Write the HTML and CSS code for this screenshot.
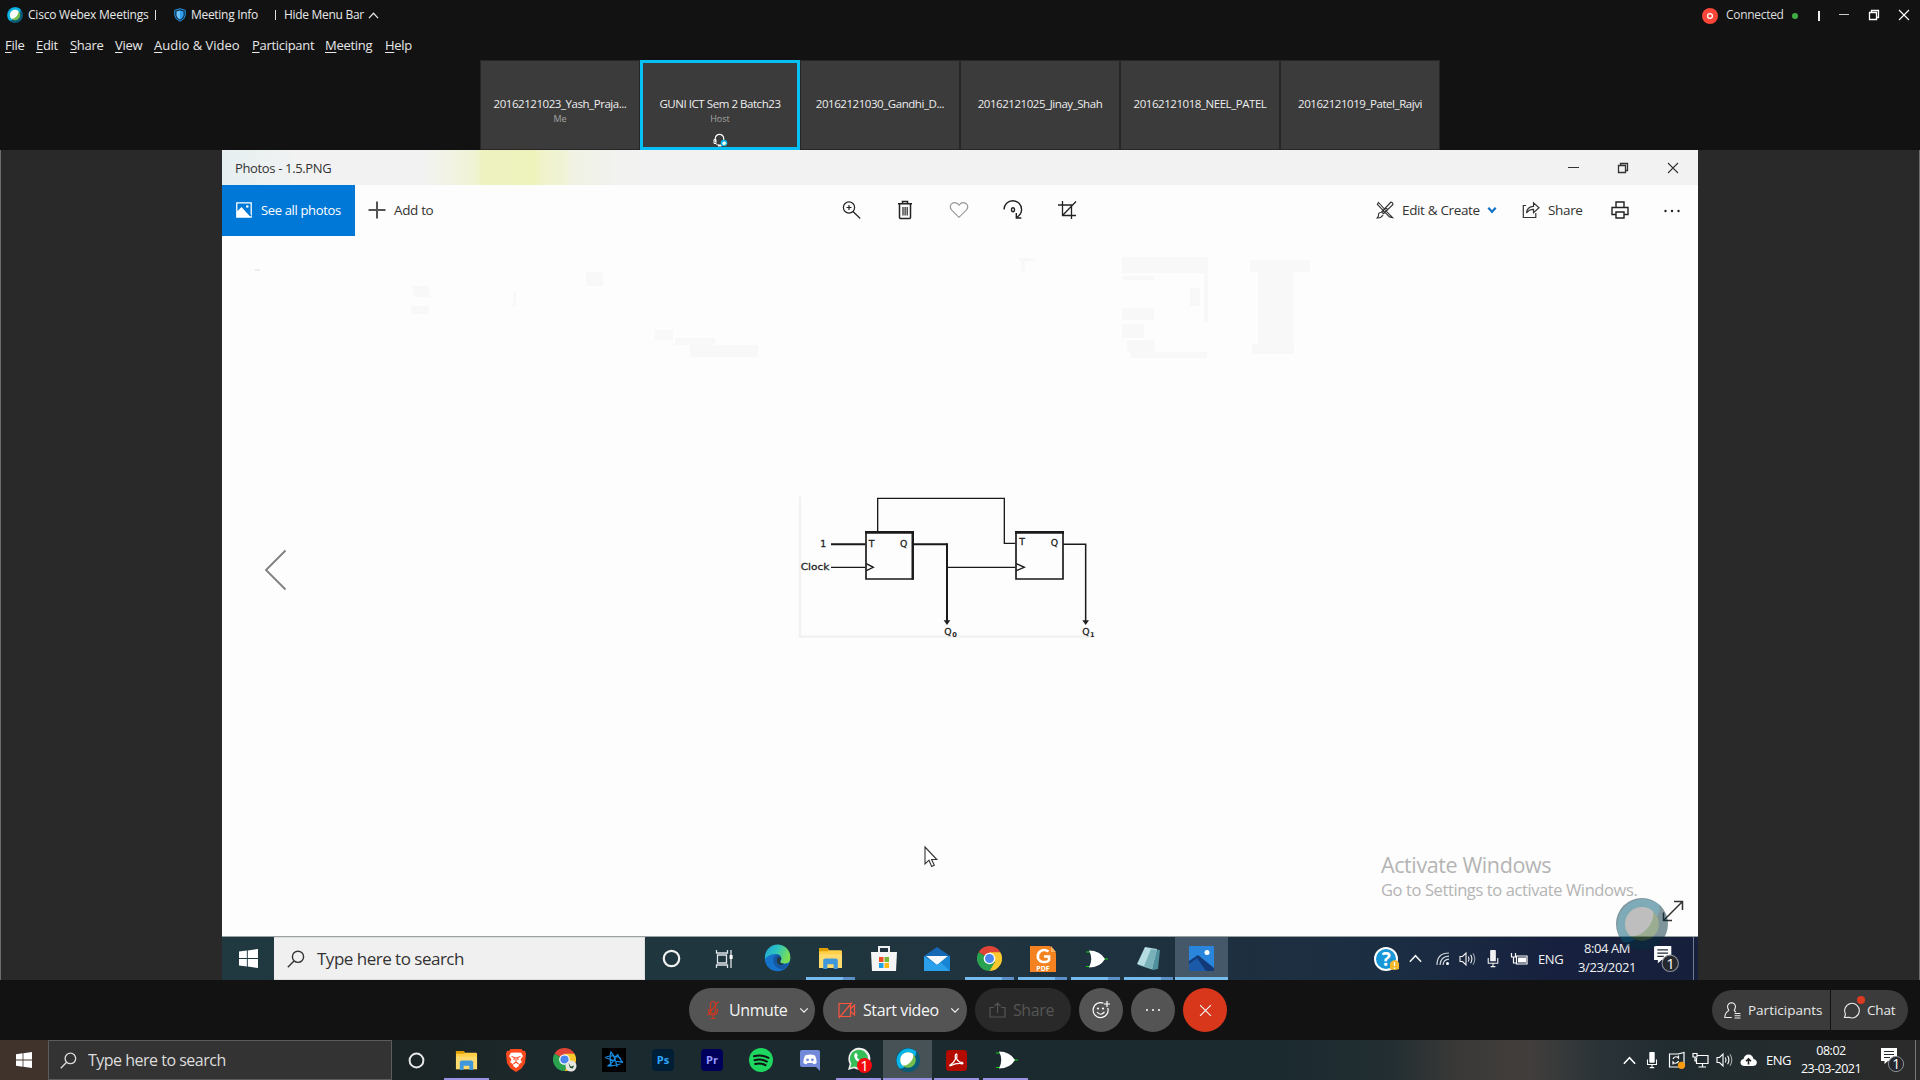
FILE: index.html
```html
<!DOCTYPE html>
<html lang="en">
<head>
<meta charset="utf-8">
<title>Cisco Webex Meetings</title>
<link rel="stylesheet" href="styles.css">
</head>
<body>
<svg class="defs" width="0" height="0" aria-hidden="true">
  <symbol id="win" viewBox="0 0 16 16"><path d="M0 2.2 6.6 1.3v6.2H0zM7.4 1.2 16 0v7.5H7.4zM0 8.4h6.6v6.3L0 13.8zM7.4 8.4H16V16l-8.6-1.2z"/></symbol>
  <symbol id="search" viewBox="0 0 18 18"><g fill="none" stroke="currentColor" stroke-width="1.4"><circle cx="11" cy="6.8" r="5.6"/><path d="M7 10.9.8 17.2"/></g></symbol>
  <symbol id="ring" viewBox="0 0 18 18"><circle cx="9" cy="9" r="7.3" fill="none" stroke="currentColor" stroke-width="2.1"/></symbol>
  <symbol id="folder" viewBox="0 0 24 24"><path d="M1 2h8l1.5 2H22a1 1 0 0 1 1 1v16H1z" fill="#ffcf48"/><path d="M1 2h8l1.5 2-1 1H1z" fill="#dfa000"/><path d="M1 8h22v13H1z" fill="#ffdb6e"/><path d="M5 22v-9l2-1h10l2 1v9h-4v-4.5H9V22z" fill="#3f97dc"/></symbol>
  <symbol id="chrome" viewBox="0 0 24 24"><path d="M12 12 1.6 6A12 12 0 0 1 22.4 6z" fill="#e04437"/><path d="M12 12 1.6 6A12 12 0 0 0 12 24l5-8z" fill="#2aa14f"/><path d="M12 12V6h10.4A12 12 0 0 1 12 24l5.2-9z" fill="#fbc92e"/><circle cx="12" cy="12" r="5.6" fill="#fff"/><circle cx="12" cy="12" r="4.3" fill="#4a86ee"/></symbol>
  <symbol id="gate" viewBox="0 0 24 20"><path d="M2 3h4.500M2 17.500h4.500M20 10h4" stroke="#10d010" stroke-width="1.200"/><path d="M5 1.500Q16 1.500 21 10 16 18.500 5 18.500 9.500 10 5 1.500z" fill="#fff"/></symbol>
  <symbol id="speaker" viewBox="0 0 18 16"><g fill="none" stroke="currentColor" stroke-width="1.100"><path d="M1 5.500h2.500L7 2v12l-3.500-3.500H1z"/><path d="M9.300 5.500q1.500 2.500 0 5M11.600 3.800q2.600 4.200 0 8.400"/><path d="M14 2.200q3.600 5.800 0 11.600" opacity=".6"/></g></symbol>
  <symbol id="mic" viewBox="0 0 12 20"><rect x="3" y="1" width="6" height="12" rx="1" fill="currentColor"/><path d="M1 9.500V15h10V9.500M6 15v3M3.500 18.500h5" fill="none" stroke="currentColor" stroke-width="1.200"/></symbol>
  <symbol id="note" viewBox="0 0 26 26"><path d="M1 1h16v13H8l-3.500 3V14H1z" fill="#fff"/><path d="M4 4.500h10M4 7.500h10M4 10.500h6" stroke="#222a36" stroke-width="1.200"/><circle cx="16" cy="17" r="7.600" fill="#25282d" stroke="#8c8f94" stroke-width="1"/><text x="16" y="22" text-anchor="middle" class="note-n">1</text></symbol>
  <symbol id="up" viewBox="0 0 12 8"><path d="M.8 7 6 1.400 11.200 7" fill="none" stroke="currentColor" stroke-width="1.400"/></symbol>
  <symbol id="down" viewBox="0 0 12 8"><path d="M1.500 1.500 6 6l4.500-4.500" fill="none" stroke="currentColor" stroke-width="1.400"/></symbol>
  <symbol id="restore" viewBox="0 0 12 12"><path d="M1.500 3.500h7v7h-7zM3.500 3.500v-2h7v7h-2" fill="none" stroke="currentColor" stroke-width="1.300"/></symbol>
  <symbol id="close" viewBox="0 0 12 12"><path d="m1 1 10 10M11 1 1 11" fill="none" stroke="currentColor" stroke-width="1.100"/></symbol>
  <symbol id="ball" viewBox="0 0 32 32"><circle cx="16" cy="16" r="16" fill="#0a5a78"/><path d="M26.500 4A16 16 0 0 0 4.500 27q4.500 1 9-3L24 13q4-4.500 2.500-9z" fill="#08b4ea"/><circle cx="16" cy="16" r="10.400" fill="#74bf4b"/><path d="M23 8.300A10.400 10.400 0 0 0 8.700 23.400Q14 24 18.500 19.500 23.500 14.500 23 8.300z" fill="#fff"/></symbol>
</svg>

<div class="screen">
  <header class="titlebar">
    <svg class="s16"><use href="#ball"/></svg>
    <span class="app">Cisco Webex Meetings</span><i class="sep"></i>
    <svg class="shield" viewBox="0 0 12 14"><path d="M6 .7 11.300 2.300v5Q11 11 6 13.300 1 11 .7 7.300v-5z" fill="#0d3350" stroke="#2a8fdc" stroke-width="1"/><path d="M6 2.500 9.500 3.600V7.500Q9 10 6 11.500z" fill="#2f9df0"/><path d="M6 2.500 2.500 3.600V7.500Q3 10 6 11.500z" fill="#6cc2fb"/></svg>
    <span>Meeting Info</span><i class="sep"></i>
    <span>Hide Menu Bar</span>
    <svg class="caret"><use href="#up"/></svg>
    <div class="status">
      <svg class="rec" viewBox="0 0 18 18"><circle cx="9" cy="9" r="8" fill="#fa4539"/><circle cx="9" cy="9" r="2.400" fill="none" stroke="#fff" stroke-width="1.300"/></svg>
      <span>Connected</span>
      <i class="dot"></i><i class="bar"></i>
      <i class="min"></i>
      <svg class="s12"><use href="#restore"/></svg>
      <svg class="s12"><use href="#close"/></svg>
    </div>
  </header>
  <nav class="menu">
    <span><u>F</u>ile</span><span><u>E</u>dit</span><span><u>S</u>hare</span><span><u>V</u>iew</span><span class="wide"><u>A</u>udio &amp; Video</span><span><u>P</u>articipant</span><span><u>M</u>eeting</span><span><u>H</u>elp</span>
  </nav>
  <section class="tiles">
    <div class="tile"><b>20162121023_Yash_Praja...</b><small>Me</small></div>
    <div class="tile active"><b>GUNI ICT Sem 2 Batch23</b><small>Host</small>
      <svg class="headset" viewBox="0 0 15 14"><path d="M2.300 9V5.500a4 4 0 0 1 8.400 0V8" fill="none" stroke="#fff" stroke-width="1.200"/><path d="M1 6.500h2v4H1zM3 10.500q1 2 3.500 2" fill="none" stroke="#fff"/><rect x="5" y="11.500" width="3.500" height="2" fill="#fff"/><circle cx="11" cy="10" r="3.300" fill="#08b4ea"/><circle cx="11.300" cy="10.300" r="1.900" fill="#fff"/><path d="M10.500 12.300q2.500-.5 2.500-3 .6 3.500-2.500 3z" fill="#74bf4b"/></svg></div>
    <div class="tile"><b>20162121030_Gandhi_D...</b></div>
    <div class="tile"><b>20162121025_Jinay_Shah</b></div>
    <div class="tile"><b>20162121018_NEEL_PATEL</b></div>
    <div class="tile"><b>20162121019_Patel_Rajvi</b></div>
  </section>

  <main class="stage">
    <div class="shared">
      <div class="ph-title"><span>Photos - 1.5.PNG</span>
        <i class="min"></i><svg class="s13"><use href="#restore"/></svg><svg class="s13"><use href="#close"/></svg></div>
      <div class="ph-tools">
        <div class="see"><svg width="16" height="16" viewBox="0 0 16 16"><path d="M.8.8h14.400v14.400H.8z" fill="none" stroke="#fff" stroke-width="1.300"/><path d="M1 9.500 5.500 5l5 5.500L15 15H1z" fill="#fff"/><path d="m10 8.500 5 5.500" stroke="#0078d7" stroke-width="1.200"/><circle cx="11.300" cy="4.500" r="1.300" fill="#fff"/></svg><span>See all photos</span></div>
        <div class="add"><svg width="18" height="18" viewBox="0 0 18 18"><path d="M9 .5v17M.5 9h17" stroke="#555" stroke-width="2"/></svg><span>Add to</span></div>
        <div class="mid">
          <svg viewBox="0 0 20 20"><g fill="none" stroke="#222" stroke-width="1.200"><circle cx="8" cy="7.500" r="5.600"/><path d="m12 11.500 7.200 7M8 5v5M5.500 7.500h5"/></g></svg>
          <svg viewBox="0 0 20 20"><g fill="none" stroke="#222" stroke-width="1.500"><path d="M3 3.800h14M7.500 3.500V1.600h5v1.900M4.500 4v13.500q0 1 1 1h9q1 0 1-1V4"/><path d="M8 7v8.500M10.100 7v8.500M12.200 7v8.500" stroke-width="1.200"/></g></svg>
          <svg viewBox="0 0 20 20"><path d="M10 17.300 2.500 10Q.4 7.500 1.800 4.700 3.300 2.400 6 2.600q2.500.2 4 2.700 1.500-2.500 4-2.700 2.700-.2 4.200 2.100 1.400 2.800-.7 5.300z" fill="none" stroke="#999" stroke-width="1.100"/></svg>
          <svg viewBox="0 0 20 20"><g fill="none" stroke="#222" stroke-width="1.400"><path d="M1 9.500A8.600 8.600 0 0 1 18.600 9.500q0 4.500-4.800 8M13.300 13v5h5"/><ellipse cx="10" cy="9.700" rx="1.500" ry="2"/></g></svg>
          <svg viewBox="0 0 20 20"><path d="M1 5h13.500v14M5.500 1v14.500H19M5.500 15.500 19 1.500" fill="none" stroke="#222" stroke-width="1.300"/></svg>
        </div>
        <div class="right">
          <svg width="18" height="18" viewBox="0 0 18 18"><g fill="none" stroke="#333" stroke-width="1.100"><path d="m2.500 1.500 12 13 2 2-3-.6L1.300 3.500zM15 1 5.500 11l2 1.700L17 3.500q0-2-2-2.500zM5 11.500Q2 11.500 2.500 15L1 17q4 .4 6-3M6 9l2 2M9.500 6.500 12 9"/></g></svg>
          <span>Edit &amp; Create</span>
          <svg width="10" height="8" viewBox="0 0 10 8"><path d="M1.300 1.800 5 5.800l3.700-4" fill="none" stroke="#1273c9" stroke-width="2.200"/></svg>
          <svg width="18" height="18" viewBox="0 0 18 18"><path d="M4 4.500H1.300v12h12.500V12M4.500 12Q5 5.500 11.500 5.300V1.800L17 6.700l-5.500 5V8.300Q7 8.200 4.500 12z" fill="none" stroke="#333" stroke-width="1.200"/></svg>
          <span>Share</span>
          <svg width="18" height="18" viewBox="0 0 18 18"><path d="M5 6V1h8v5M5 13.500H1V6.500h16v7h-4M5 11h8v6H5z" fill="none" stroke="#222" stroke-width="1.400"/></svg>
          <svg width="18" height="18" viewBox="0 0 18 18"><g fill="#222"><circle cx="2.500" cy="10" r="1.200"/><circle cx="9" cy="10" r="1.200"/><circle cx="15.500" cy="10" r="1.200"/></g></svg>
        </div>
      </div>
      <div class="viewer">
        <svg class="prev" width="24" height="42" viewBox="0 0 24 42"><path d="M21.500 1.500 2 21l19.500 19.500" fill="none" stroke="#808080" stroke-width="1.900"/></svg>
        <svg class="circuit" width="340" height="180" viewBox="0 0 1020 540">
          <path d="M60 50v420h880" fill="none" stroke="#f1f1f1" stroke-width="7"/>
          <g fill="none" stroke="#1a1a1a" stroke-width="4">
            <path d="M293 155V55h380v135h32M153 262h103M500 262h206"/>
            <path d="M153 193h103M399 193h102" stroke-width="6"/>
            <path d="M501 190v234" stroke-width="6"/>
            <path d="M850 193h67v232" stroke-width="4.500"/>
            <path d="M258 155v142h141V155" stroke-width="5"/><path d="M255 157h147" stroke-width="8"/><path d="M398 157v142" stroke-width="7"/>
            <path d="M708 155v142h141V155" stroke-width="5"/><path d="M705 157h147" stroke-width="8"/>
            <path d="m259 251 21 11-21 10M709 251l24 11-24 10"/>
          </g>
          <path d="M491 421h20l-10 14zM907 421h20l-10 14z"/>
          <g class="lbl"><text x="121" y="201">1</text><text x="62" y="271" textLength="86" lengthAdjust="spacingAndGlyphs">Clock</text><text x="266" y="201">T</text><text x="360" y="202">Q</text><text x="718" y="195">T</text><text x="812" y="197">Q</text><text x="493" y="466">Q</text><text x="907" y="465">Q</text></g>
          <g class="sub"><text x="517" y="471">0</text><text x="930" y="471">1</text></g>
        </svg>
        <svg class="residue" width="1476" height="330" viewBox="222 180 1476 330" aria-hidden="true">
          <g fill="#f8f8f8"><path d="M1122 257h85v16h-85zM1122 276h32v4h-32zM1122 308h32v12h-32zM1122 324h22v14h-22zM1127 340h28v12h-28zM1130 352h77v6h-77zM1204 257h4v65h-4zM1190 288h10v18h-10zM1250 260h60v12h-60zM1258 272h35v72h-35zM1252 344h42v10h-42zM413 286h16v11h-16zM411 306h18v8h-18zM513 292h3v14h-3zM586 272h17v14h-17zM655 330h18v10h-18zM675 338h40v7h-40zM690 345h68v12h-68zM1019 258h16v3h-16zM1021 259h4v13h-4z"/></g>
          <path d="M255 270h5" stroke="#ddd"/>
        </svg>
        <div class="activate"><p>Activate Windows</p><p>Go to Settings to activate Windows.</p></div>
        <svg class="expand" width="22" height="22" viewBox="0 0 22 22"><path d="m2 20 18-18M12 1.500h8.500V10M1.500 12.500v8H10" fill="none" stroke="#333" stroke-width="1.500"/></svg>
        <svg class="pointer" width="14" height="22" viewBox="0 0 14 22"><path d="M1 1v17l4-3.800L7.700 20.500l2.600-1.200L7.600 13.500H12.800z" fill="#fff" stroke="#333" stroke-width="1.100"/></svg>
      </div>
      <div class="rt">
        <div class="rt-start"><svg width="19" height="19" fill="#fff"><use href="#win"/></svg></div>
        <div class="rt-search"><svg width="18" height="18"><use href="#search"/></svg><span>Type here to search</span></div>
        <div class="rt-apps">
          <i><svg width="19" height="19"><use href="#ring"/></svg></i>
          <i><svg width="18" height="18" viewBox="0 0 18 18"><path d="M1.500 0v3h11V0M1.500 18v-3h11v3M2.500 5h9v8h-9zM16 0v18" fill="none" stroke="#dde3e6" stroke-width="1.300"/><rect x="14.600" y="5" width="3" height="4" fill="#fff"/></svg></i>
          <i><svg width="27" height="27" viewBox="0 0 27 27"><defs><linearGradient id="eg" x1="0" y1="0" x2="1" y2=".4"><stop offset="0" stop-color="#1fa3dc"/><stop offset=".5" stop-color="#2cc4bf"/><stop offset="1" stop-color="#7ade55"/></linearGradient></defs><circle cx="13.500" cy="13.500" r="12.700" fill="#1673cc"/><path d="M1 11.500A12.600 12.600 0 0 1 26.300 13q.2 5-5 5.500-5 .3-5-1.800c0-1.200 1.500-1.500 1-4Q16.500 9 11.500 9 5 9 1 14z" fill="url(#eg)"/><path d="M9 14q.5-3.500 4-4.500 4 .3 4.300 4-.3 1.500-1.200 2.500-.4 3.300 5 3 3.300-.5 4-1.500-2 5.500-7.500 7Q9 22.500 9 14z" fill="#1559a4"/><path d="M17.300 13.500q-.3 1.500-1.200 2.500-.4 2.800 4 2.800-4 3-7-1-1-3 .5-5.300 2-1.500 3.700 1z" fill="#203a42"/></svg></i>
          <i class="run"><svg width="25" height="25"><use href="#folder"/></svg></i>
          <i><svg width="26" height="27" viewBox="0 0 26 27"><path d="M8 8V2h10v6" fill="none" stroke="#eee" stroke-width="2"/><path d="M0 7h26l-1 19H1z" fill="#f5f5f5"/><path d="M8 12h4.500v5H8z" fill="#f04c24"/><path d="M13.500 12H18v5h-4.500z" fill="#7cb82f"/><path d="M8 18h4.500v5H8z" fill="#1ea3e6"/><path d="M13.500 18H18v5h-4.500z" fill="#fbb714"/></svg></i>
          <i><svg width="26" height="26" viewBox="0 0 26 26"><path d="M0 10 13 1l13 9v14H0z" fill="#1667b4"/><path d="M2 10h22L13 19z" fill="#f6f9fc"/><path d="m0 10 13 9L26 10v15H0z" fill="#2ba0ea"/><path d="m26 10-9 6.500L26 25z" fill="#1884d4"/></svg></i>
          <i class="run"><svg width="25" height="25"><use href="#chrome"/></svg></i>
          <i class="run"><svg width="26" height="26" viewBox="0 0 26 26"><path d="M0 0h20l6 7v19H0z" fill="#f58220"/><path d="M21 0v6h5z" fill="#ffb060"/><path d="M18.500 5.500Q14 2.500 10 5.500q-3 3-2 7 2 4 7 3.500 3 0 4-2v-3.500h-5" fill="none" stroke="#fff" stroke-width="2.600"/><text x="13" y="24.500" text-anchor="middle" class="pdf">PDF</text></svg></i>
          <i class="run"><svg width="24" height="20"><use href="#gate"/></svg></i>
          <i class="run"><svg width="26" height="26" viewBox="0 0 26 26"><path d="M9 2 24 4l-2 19-5 1L2 19z" fill="#4f8e9b"/><path d="M9 1 21 3l-5 20L1 18z" fill="#b5dce0"/><path d="M15 3 21 4l-5 19-8-3z" fill="#79b1b9"/></svg></i>
          <i class="run on"><svg width="25" height="25" viewBox="0 0 25 25"><rect width="25" height="25" rx="1" fill="#2a86dc"/><path d="M0 15 9 9l16 13v3H0z" fill="#123a78"/><path d="M0 18 8 12l9 13H0z" fill="#1b5aa8"/><circle cx="18" cy="6.500" r="2.500" fill="#fff"/></svg></i>
        </div>
        <div class="rt-tray">
          <svg width="26" height="26" viewBox="0 0 26 26"><circle cx="12" cy="13" r="11" fill="#1796d8" stroke="#fff" stroke-width="2"/><text x="12" y="20" text-anchor="middle" class="q">?</text><path d="M16 17q5-6 9 0v6q-5 2-9 0z" fill="#f4b82c"/><path d="M20.500 16v4M20.500 21.500V23" stroke="#fff" stroke-width="1.300"/></svg>
          <svg width="13" height="9"><use href="#up"/></svg>
          <svg width="14" height="14" viewBox="0 0 14 14"><g fill="none" stroke="#d0d5dc" stroke-width="1.200"><path d="M1 13Q1 1 13 1M4 13Q4.500 4.500 13 4.200M7 13Q7.500 7.500 13 7.200"/></g><circle cx="11.500" cy="11.500" r="1.500" fill="#fff"/></svg>
          <svg width="18" height="16"><use href="#speaker"/></svg>
          <svg width="12" height="19"><use href="#mic"/></svg>
          <svg width="18" height="14" viewBox="0 0 18 14"><path d="M6.500 4H17v8H6.500zM1.500 1v4h4V1M3.500 5v6h3" fill="none" stroke="#fff" stroke-width="1.200"/><path d="M8 5.500h8v5H8z" fill="#fff"/></svg>
          <span>ENG</span>
          <div class="clock"><span>8:04 AM</span><span>3/23/2021</span></div>
          <svg width="28" height="28"><use href="#note"/></svg>
        </div>
      </div>
      <svg class="orb" width="52" height="52"><use href="#ball"/></svg>
    </div>
  </main>

  <section class="controls">
    <div class="calls">
      <button class="pill p1"><svg width="14" height="20" viewBox="0 0 14 20"><path d="M4.500 5a2.500 3.500 0 0 1 5 0v5a2.500 3.500 0 0 1-5 0zM2.500 9v2q.5 4 4.500 4t4.500-4V9M7 15v3M4.500 18.500h5M12.500 1.500l-11 14" fill="none" stroke="#d4371c" stroke-width="1.200"/></svg><span>Unmute</span><svg width="10" height="7"><use href="#down"/></svg></button>
      <button class="pill p2"><svg width="18" height="18" viewBox="0 0 18 18"><path d="M1 2.500h11.500v13H1zM12.500 8 16.500 4v10l-4-3.500M1 17 14 1.500" fill="none" stroke="#fa5540" stroke-width="1.200"/></svg><span>Start video</span><svg width="10" height="7"><use href="#down"/></svg></button>
      <button class="pill p3"><svg width="17" height="16" viewBox="0 0 17 16"><path d="M5 5.500H1V15h15V5.500h-4M8.500 11V1M5.500 4l3-3 3 3" fill="none" stroke="#555" stroke-width="1.200"/></svg><span>Share</span></button>
      <button class="round"><svg width="20" height="20" viewBox="0 0 20 20"><g fill="none" stroke="#fff" stroke-width="1.200"><path d="M12.500 3.200A7.500 7.500 0 1 0 16.800 8M6 12q3.500 4.500 7.500 0M16 1v6M13 4h6"/></g><circle cx="7" cy="8.500" r="1.100" fill="#fff"/><circle cx="12" cy="8.500" r="1.100" fill="#fff"/></svg></button>
      <button class="round"><svg width="16" height="4" viewBox="0 0 16 4"><g fill="#fff"><circle cx="2" cy="2" r="1"/><circle cx="8" cy="2" r="1"/><circle cx="14" cy="2" r="1"/></g></svg></button>
      <button class="round end"><svg width="13" height="13"><use href="#close"/></svg></button>
    </div>
    <div class="panels">
      <button class="people"><svg width="17" height="17" viewBox="0 0 17 17"><path d="M5 8.500Q3.500 6.500 3.500 4.500 4 1 7.500.8 11 1 11.500 4.500q0 2-1.500 4M5 8.500q-4 2-4.200 7h7M10 8.500l2 1.500M10.500 11.500h6M10.500 13.700h6M10.500 16h6" fill="none" stroke="#eee" stroke-width="1.100"/></svg><span>Participants</span></button>
      <button class="chat"><svg width="17" height="17" viewBox="0 0 17 17"><path d="M1.500 15.500 2.500 12A7.300 7.300 0 1 1 6 15.300z" fill="none" stroke="#eee" stroke-width="1.100"/></svg><span>Chat</span><i></i></button>
    </div>
  </section>

  <footer class="taskbar">
    <div class="start"><svg width="16" height="16" fill="#fff"><use href="#win"/></svg></div>
    <div class="search"><svg width="17" height="17"><use href="#search"/></svg><span>Type here to search</span></div>
    <div class="apps">
      <i class="cortana"><svg width="17" height="17"><use href="#ring"/></svg></i>
      <i class="run"><svg width="23" height="23"><use href="#folder"/></svg></i>
      <i><svg width="20" height="24" viewBox="0 0 20 24"><path d="M4.500 1h11L17 3l2-.3 1 3.300-1 9-3.500 5.500L10 24l-5.500-3.500L1 15 0 6l1-3.300L3 3z" fill="#fb4a1e"/><path d="m10 4.500 5 .3 2 3.200-2.500 3.500L16 14l-3 2.300-.5 2L10 20l-2.500-1.700-.5-2L4 14l1.500-2.500L3 8l2-3.200z" fill="#fff"/><path d="M5.500 8.500 8.500 9.500 7.800 12M14.500 8.500l-3 1 .7 2.500M10 9v5M7.500 16 10 14l2.500 2" fill="none" stroke="#fb4a1e" stroke-width="1.100"/></svg></i>
      <i><svg width="24" height="24" viewBox="0 0 24 24"><use href="#chrome" width="23" height="23"/><circle cx="18" cy="18" r="5.500" fill="#e6e6e2"/><path d="m15.500 15 1.500 5 3 .5 1-3-3 1z" fill="#2c5b39"/></svg></i>
      <i><svg width="24" height="24" viewBox="0 0 24 24"><path fill="#000" d="M0 0h24v24H0z"/><g fill="none" stroke="#168be0" stroke-width="1.300"><path d="M8.500 3.500Q13 8 15 19M9 3.500Q7 11 9.500 18.500M3 9.500Q12 6 19 10.500M3 9.500Q11 13 21 14.500M16 6Q11 15 5.500 18M15.500 6.500Q19 13 21 14.500M5.500 18q7 0 13-2"/></g></svg></i>
      <i><svg width="22" height="22" viewBox="0 0 22 22"><rect width="22" height="22" rx="4" fill="#001e36"/><text x="11" y="15" text-anchor="middle" class="adobe" fill="#31a8ff">Ps</text></svg></i>
      <i><svg width="22" height="22" viewBox="0 0 22 22"><rect width="22" height="22" rx="4" fill="#00005b"/><text x="11" y="15" text-anchor="middle" class="adobe" fill="#9999ff">Pr</text></svg></i>
      <i><svg width="24" height="24" viewBox="0 0 24 24"><circle cx="12" cy="12" r="12" fill="#1ed760"/><path d="M5 8.200q7.500-2 14.500 1.600M5.600 12.200q6.500-1.700 12.300 1.400M6.200 16q5.500-1.400 10.300 1.200" fill="none" stroke="#121212" stroke-width="2" stroke-linecap="round"/></svg></i>
      <i><svg width="20" height="22" viewBox="0 0 20 22"><path d="M2 1h16q2 0 2 2v19l-4-4H2q-2 0-2-2V3q0-2 2-2z" fill="#7289da"/><path d="M5 6.500q5-2 10 0 2 4 1.700 7.500-1.700 1.300-3.200 1.300l-1-1.300H7.500l-1 1.300Q5 15.300 3.300 14 3 10.500 5 6.500z" fill="#fff"/><circle cx="7.600" cy="10.800" r="1.400" fill="#7289da"/><circle cx="12.400" cy="10.800" r="1.400" fill="#7289da"/></svg></i>
      <i class="run"><svg width="26" height="26" viewBox="0 0 26 26"><path d="m2 23 1.700-6A11 11 0 1 1 8 21.300z" fill="#f2f2f2"/><path d="m4.200 20.800 1.200-4.200a9 9 0 1 1 3.300 3z" fill="#35bd57"/><path d="M9.500 6q1-.5 1.500 1l.8 1.700-1 1.400q1.300 2.500 3.700 3.500l1.500-1.500 2.500 1.300q-.5 2.800-3 2.600Q9.500 14.500 8.200 9.500 8 7 9.500 6z" fill="#fff"/><circle cx="18.500" cy="18.500" r="7.500" fill="#f40a0e"/><text x="18.500" y="24" text-anchor="middle" class="badge">1</text></svg></i>
      <i class="run on"><svg width="24" height="24"><use href="#ball"/></svg></i>
      <i class="run"><svg width="21" height="21" viewBox="0 0 21 21"><rect width="21" height="21" rx="3.500" fill="#b30b00"/><path d="M10.300 4q1.200.3.200 4.500 2 4 5.700 4 1.300.6.300 1.300-5.500-1.200-11.300 1.700-1.500.8-1.400-.2Q7.500 13.500 9.500 9 8.700 4.500 10.300 4z" fill="none" stroke="#fff" stroke-width="1.300"/></svg></i>
      <i class="run"><svg width="24" height="20"><use href="#gate"/></svg></i>
    </div>
    <div class="tray">
      <svg width="13" height="9"><use href="#up"/></svg>
      <svg width="12" height="18"><use href="#mic"/></svg>
      <svg width="18" height="18" viewBox="0 0 18 18"><path d="M10 3H1.500v13H12M10 3l6-1.500V14M5 8q1-3 4.500-2l1 1V4.500M10.500 10q-1 3-4.500 2L5 11v2.500" fill="none" stroke="#fff" stroke-width="1.200"/><circle cx="13.500" cy="14.300" r="3.600" fill="#ff9b0e"/></svg>
      <svg width="17" height="16" viewBox="0 0 17 16"><path d="M5.500 3.500H16v8H4.500V6M10.500 11.500v3M6.500 15H14M1 1.500h4v3.500H1zM3 5v4h1.500" fill="none" stroke="#fff" stroke-width="1.200"/></svg>
      <svg width="18" height="16"><use href="#speaker"/></svg>
      <svg width="17" height="12" viewBox="0 0 17 12"><path d="M4 12Q.5 11.500.5 8.500T3.500 5Q4.500.5 8.500.5t5 4.500q3.300.5 3.300 3.500T13.500 12z" fill="#fff"/><path d="M8.500 10.500V5M6 7.300l2.500-2.500L11 7.300" fill="none" stroke="#222" stroke-width="1.600"/></svg>
      <span>ENG</span>
      <div class="clock"><span>08:02</span><span>23-03-2021</span></div>
      <svg width="26" height="26"><use href="#note"/></svg>
    </div>
  </footer>
</div>
</body>
</html>
```
FILE: styles.css
```css
* { box-sizing: border-box; }
body { margin: 0; background: #121212; font-family: "Open Sans", "Noto Sans", sans-serif; color: #e8e8e8; }
i { display: block; font-style: normal; }
p { margin: 0; }
span { white-space: nowrap; }
svg { display: block; overflow: visible; flex: none; }
button { border: 0; padding: 0; font: inherit; color: inherit; }
.defs { position: absolute; }
.screen { width: 1920px; height: 1080px; display: grid; grid-template-rows: 30px 30px 90px 830px 60px 40px; overflow: hidden; }

.titlebar { display: grid; grid-template-columns: 21px 127px 19px 17px 84px 9px 84px 12px 1fr; align-items: center; padding-left: 7px; font-size: 12px; letter-spacing: -.3px; }
.titlebar span { margin-top: -1px; }
.titlebar .app { letter-spacing: -.22px; }
.s16 { width: 16px; height: 16px; }
.sep { width: 1px; height: 10px; background: #ddd; }
.shield { width: 12px; height: 14px; }
.caret { width: 11px; height: 7px; }
.status { display: grid; grid-template-columns: 25px 66px 26px 21px 29px 30px 12px; justify-content: end; align-items: center; padding-right: 10px; height: 28px; color: #ddd; }
.rec { width: 18px; height: 18px; margin-top: 2px; }
.dot { width: 6px; height: 6px; border-radius: 50%; background: #3fae42; margin-top: 2px; }
.bar { width: 2px; height: 10px; background: #eee; margin-top: 2px; }
.status .min { width: 10px; height: 1px; background: #ccc; margin-top: -2px; }
.s12 { width: 12px; height: 12px; margin-top: -1px; color: #fff; }

.menu { display: grid; grid-template-columns: 31px 34px 45px 39px 98px 73px 60px auto; justify-content: start; padding-left: 5px; align-items: center; font-size: 13px; letter-spacing: -.3px; }
.menu .wide { letter-spacing: 0; }
.menu u { text-underline-offset: 2px; }

.tiles { display: grid; grid-template-columns: repeat(6, 160px); justify-content: center; }
.tile { display: flex; flex-direction: column; align-items: center; background: #3b3b3b; border: 1px solid #262626; padding-top: 34px; }
.tile b { font-weight: 400; font-size: 11.5px; line-height: 17px; letter-spacing: -.45px; color: #eee; }
.tile small { font-size: 9px; line-height: 14px; color: #a5a5a5; }
.tile.active { border: 3px solid #05bff5; padding-top: 32px; }
.headset { width: 15px; height: 14px; margin-top: 7px; }

.stage { display: flex; justify-content: center; background: #292929; border: solid #6d6d6d; border-width: 0 1px; }
.shared { position: relative; width: 1476px; height: 830px; display: grid; grid-template-rows: 35px 51px 700px 44px; background: #fdfdfd; color: #333; }
.ph-title { display: grid; grid-template-columns: 1333px 49px 50px 13px; align-items: center; padding-left: 13px; font-size: 13px; letter-spacing: -.35px; background: linear-gradient(90deg, #e6eff0 0, #eff2f2 60px, #f2f2f2 80px, #f2f2f2 200px, #f2f3e4 228px, #f0f3d2 254px, #eef2c0 260px, #eef2bb 312px, #f0f3cc 322px, #f0f3d4 342px, #f1f2e4 350px, #f2f2f0 400px, #f2f2f2 420px, #f2f2f2); }
.ph-title .min { width: 11px; height: 1px; background: #333; }
.s13 { width: 12px; height: 12px; }
.ph-tools { display: grid; grid-template-columns: 133px 469px 279px 1fr; align-items: stretch; font-size: 13.500px; letter-spacing: -.35px; }
.ph-tools > div { display: grid; align-items: center; padding-bottom: 1px; }
.ph-tools .see { background: #0078d7; color: #fff; grid-template-columns: 25px auto; justify-content: start; padding-left: 14px; font-size: 13px; }
.ph-tools .add { grid-template-columns: 26px auto; justify-content: start; padding-left: 13px; }
.ph-tools .mid { grid-template-columns: repeat(5, 54px); justify-items: center; padding-left: 0; }
.mid svg { width: 20px; height: 20px; }
.ph-tools .right { grid-template-columns: 26px 85px 35px 26px 63px 52px 18px; justify-content: end; padding-right: 17px; }

.viewer { position: relative; display: grid; grid-template-columns: 516px 340px 1fr; grid-template-rows: 244px 180px 1fr; padding-left: 42px; }
.prev { grid-row: 2; margin-top: 69px; }
.circuit { grid-row: 2; grid-column: 2; font-family: "DejaVu Sans", sans-serif; fill: #222; }
.lbl { font-size: 28px; stroke: #222; stroke-width: .8px; }
.sub { font-size: 20px; font-weight: 700; }
.activate { grid-row: 3; grid-column: 3; margin: 191px 0 0 261px; color: #b4b4b4; }
.activate p { white-space: nowrap; font-size: 16.500px; line-height: 22px; letter-spacing: -.4px; }
.activate p:first-child { font-size: 21.500px; line-height: 28px; }
.pointer { position: absolute; left: 702px; top: 610px; }
.residue { position: absolute; left: 0; top: -56px; }
.expand { position: absolute; left: 1440px; top: 664px; }
.orb { position: absolute; left: 1394px; top: 748px; opacity: .5; filter: brightness(.5); }

.rt { display: grid; grid-template-columns: 52px 371px 583px 1fr; border-top: 1px solid #9aa1a3; background: linear-gradient(90deg, #203840 0, #20363e 40%, #1e303f 68%, #1b2d42 80%, #17213f 90%, #16203c); color: #f1f1f1; }
.rt > div { display: flex; align-items: center; }
.rt-start { justify-content: center; }
.rt .rt-search { background: #f0f0f0; color: #333; padding-left: 13px; gap: 12px; font-size: 17px; letter-spacing: -.5px; border: 1px solid #ddd; border-left: 0; }
.rt .rt-apps { display: grid; grid-template-columns: 52px 54px repeat(9, 53px); align-items: stretch; }
.rt-apps i, .apps i { display: flex; align-items: center; justify-content: center; }
.rt-apps .run { border-bottom: 3px solid transparent; border-image: linear-gradient(90deg, transparent 5px, #76b9ed 5px, #76b9ed 38px, #5a90c6 38px, #5a90c6 48px, transparent 48px) 3; padding-top: 3px; }
.rt-apps .run.on { border-image: none; border-bottom-color: #76b9ed; background: #44586a; }
.rt .rt-tray { display: grid; grid-template-columns: 35px 27px 23px 28px 23px 28px 32px 83px 28px; padding-left: 146px; border-right: 1px solid #6d7f8c; margin-right: 4px; font-size: 13px; letter-spacing: -.4px; }
.clock { display: flex; flex-direction: column; align-items: center; }
.rt-tray .clock { width: 74px; line-height: 19px; margin-top: -2px; }
.note-n { font-size: 14px; fill: #fff; }
.pdf { font-size: 7px; font-weight: 700; fill: #fff; }
.q { font-size: 19px; font-weight: 700; fill: #fff; }

.controls { display: grid; grid-template-columns: 1712px 196px; align-items: center; }
.calls { display: grid; grid-template-columns: 126px 144px 96px 44px 44px 44px; gap: 8px; padding-left: 689px; }
.pill, .round { height: 44px; border-radius: 22px; background: #545454; color: #f5f5f5; font-size: 16px; letter-spacing: -.4px; display: grid; align-items: center; }
.round { place-items: center; }
.p1 { grid-template-columns: 23px 70px 10px; padding-left: 17px; text-align: left; }
.p2 { grid-template-columns: 25px 87px 10px; padding-left: 15px; text-align: left; }
.p3 { grid-template-columns: 24px auto; padding-left: 14px; text-align: left; background: #292929; color: #555; }
.end { background: #d8371c; }
.panels { display: grid; grid-template-columns: 118px 77px; gap: 1px; font-size: 13.500px; letter-spacing: -.45px; }
.panels button { height: 40px; background: #3b3b3b; display: grid; grid-template-columns: 24px auto; justify-content: start; align-items: center; text-align: left; padding-left: 12px; }
.panels .people { border-radius: 20px 0 0 20px; }
.panels .chat { border-radius: 0 20px 20px 0; position: relative; letter-spacing: -.2px; }
.chat i { position: absolute; left: 26px; top: 6px; width: 8px; height: 8px; border-radius: 50%; background: #dc3a1e; }

.taskbar { display: grid; grid-template-columns: 48px 344px 638px 1fr; background: linear-gradient(90deg, #1b2425 400px, #1b2a2e 620px, #1b2a2f 1280px, #222e32 1390px, #3b3937 1460px, #413e3c 1530px, #2a3337 1600px, #202b2f 1680px, #252c2e 1790px, #2b2b2b 1880px); }
.taskbar > div { display: flex; align-items: center; }
.start { justify-content: center; background: #3f332b; }
.taskbar .search { background: #333; border: 1px solid #5c5c5c; padding-left: 11px; gap: 11px; font-size: 16px; letter-spacing: -.5px; color: #ddd; }
.taskbar .apps { display: grid; grid-template-columns: 50px repeat(12, 49px); align-items: stretch; }
.apps .cortana { padding-right: 2px; }
.apps .run { border-bottom: 2px solid transparent; border-image: linear-gradient(90deg, transparent 4px, #9b92e4 4px, #9b92e4 45px, transparent 45px) 2; padding-top: 2px; }
.apps .run.on { border-image: none; border-bottom-color: #9b92e4; background: #465255; }
.adobe { font-size: 11px; font-weight: 700; }
.badge { font-size: 15px; fill: #fff; }
.taskbar .tray { display: grid; grid-template-columns: 23px 22px 24px 24px 24px 26px 32px 82px 26px; padding-left: 593px; font-size: 13px; letter-spacing: -.5px; color: #fff; border-right: 1px solid #777; margin-right: 4px; }
.tray .clock { width: 66px; line-height: 18px; font-size: 12.500px; }
```
